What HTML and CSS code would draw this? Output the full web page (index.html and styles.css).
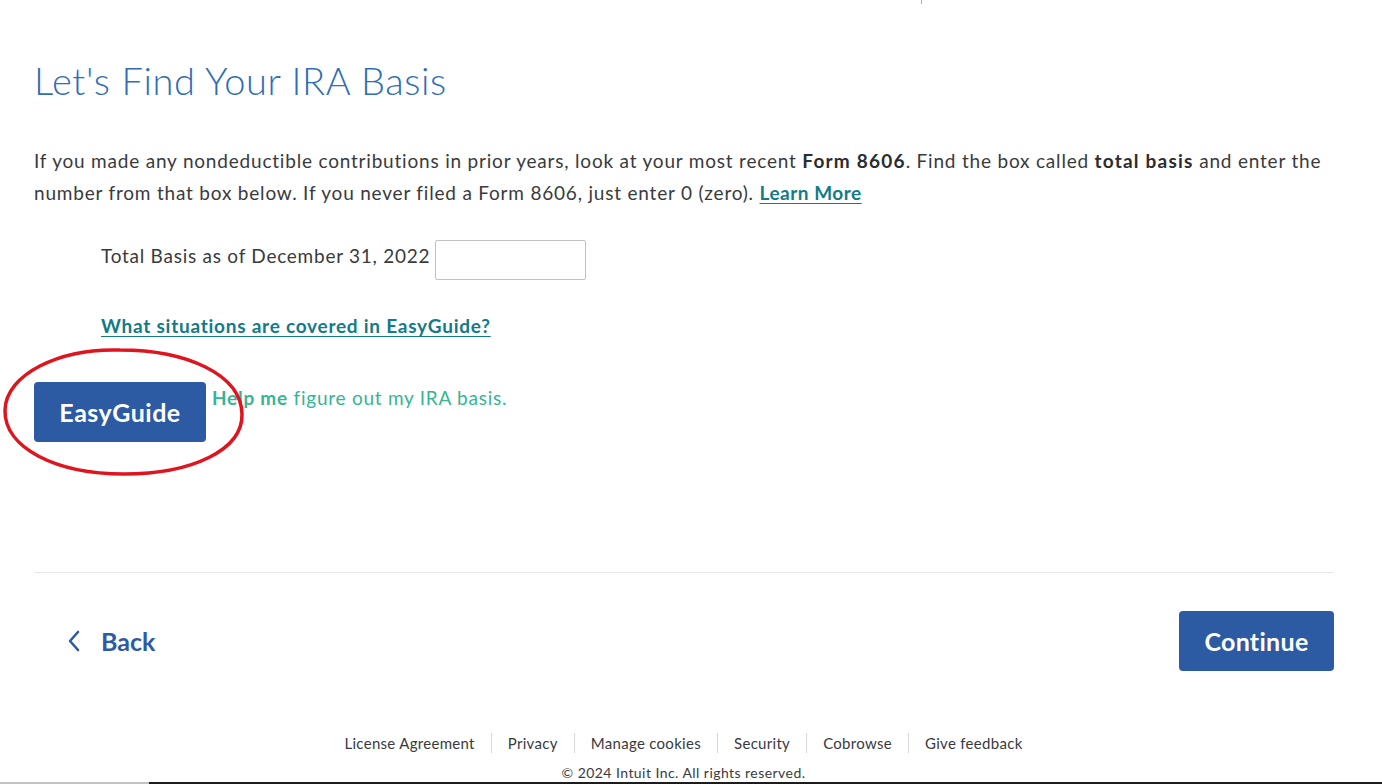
FILE: index.html
```html
<!DOCTYPE html>
<html lang="en">
<head>
    <meta charset="UTF-8">
    <meta name="viewport" content="width=device-width, initial-scale=1.0">
    <title>Let's Find Your IRA Basis</title>
    <link rel="stylesheet" href="styles.css">
</head>
<body>
    <div class="top-edge"><span class="top-tick"></span></div>

    <main class="page">
        <h1 class="title">Let's Find Your IRA Basis</h1>

        <p class="intro">
            If you made any nondeductible contributions in prior years, look at your most recent <b>Form 8606</b>. Find the box called <b>total basis</b> and enter the number from that box below. If you never filed a Form 8606, just enter 0 (zero). <a href="#" class="link">Learn More</a>
        </p>

        <div class="field-row">
            <label for="basis">Total Basis as of December 31, 2022</label>
            <input type="text" id="basis" class="basis-input">
        </div>

        <a href="#" class="link covered-link">What situations are covered in EasyGuide?</a>

        <div class="guide-row">
            <button type="button" class="btn guide-btn">EasyGuide</button>
            <span class="guide-text"><b>Help me</b> figure out my IRA basis.</span>
            <svg class="circle-mark" width="250" height="140" viewBox="0 0 250 140">
                <path d="M120 6 C 60 4, 6 30, 5 66 C 4 104, 56 130, 124 130 C 192 130, 243 106, 242 70 C 241 30, 186 6, 120 6 Z" fill="none" stroke="#e0141e" stroke-width="3.5"/>
            </svg>
        </div>

        <hr class="divider">

        <div class="nav-row">
            <a href="#" class="back-link">
                <svg width="14" height="22" viewBox="0 0 14 22"><path d="M11 2 L3 11 L11 20" fill="none" stroke="#2d5ba3" stroke-width="2.6" stroke-linecap="round" stroke-linejoin="round"/></svg>
                <span>Back</span>
            </a>
            <button type="button" class="btn continue-btn">Continue</button>
        </div>
    </main>

    <footer class="footer">
        <nav class="footer-links">
            <a href="#">License Agreement</a>
            <a href="#">Privacy</a>
            <a href="#">Manage cookies</a>
            <a href="#">Security</a>
            <a href="#">Cobrowse</a>
            <a href="#">Give feedback</a>
        </nav>
        <div class="copyright">&copy; 2024 Intuit Inc. All rights reserved.</div>
    </footer>

    <div class="taskbar"><span class="taskbar-left"></span><span class="taskbar-right"></span></div>
</body>
</html>
```

FILE: styles.css
```css
body {
    margin: 0;
    font-family: Lato, "Open Sans", sans-serif;
    color: #393a3d;
    background: #fff;
    overflow: hidden;
}
.top-edge {
    height: 4px;
}
.top-tick {
    display: block;
    width: 1px;
    height: 4px;
    margin-left: 921px;
    background: #a9b4c2;
}
.page {
    padding: 0 48px 0 34px;
}
.title {
    margin: 53px 0 0;
    font-size: 38px;
    line-height: 46px;
    font-weight: 300;
    letter-spacing: 0.6px;
    color: #2f6db5;
}
.intro {
    margin: 42px 0 0;
    font-size: 19px;
    line-height: 32px;
    letter-spacing: 0.8px;
}
.intro b {
    font-weight: 700;
    letter-spacing: 1.2px;
    color: #2b2c2f;
}
.intro .link {
    letter-spacing: 0.5px;
}
.link {
    color: #137a87;
    font-weight: 700;
    text-decoration: underline;
    text-underline-offset: 3px;
}
.field-row {
    margin: 31px 0 0 67px;
    display: flex;
    align-items: flex-start;
    gap: 5px;
    height: 40px;
}
.field-row label {
    font-size: 19px;
    line-height: 32px;
    letter-spacing: 0.75px;
}
.basis-input {
    width: 151px;
    height: 40px;
    box-sizing: border-box;
    border: 1px solid #bfc1c4;
    border-radius: 2px;
    font-size: 18px;
}
.covered-link {
    display: block;
    width: max-content;
    margin: 34px 0 0 67px;
    font-size: 19px;
    line-height: 24px;
    letter-spacing: 0.75px;
}
.guide-row {
    position: relative;
    margin-top: 44px;
    display: flex;
    align-items: flex-start;
    gap: 6px;
}
.btn {
    height: 60px;
    border: none;
    border-radius: 4px;
    background: #2d5ba3;
    color: #fff;
    font-family: Lato, "Open Sans", sans-serif;
    font-weight: 700;
    cursor: pointer;
}
.guide-btn {
    width: 172px;
    font-size: 25px;
    letter-spacing: 0.5px;
}
.guide-text {
    margin-top: 4px;
    font-size: 19px;
    line-height: 24px;
    letter-spacing: 0.75px;
    color: #35b593;
}
.circle-mark {
    position: absolute;
    left: -34px;
    top: -38px;
}
.divider {
    margin: 130px 0 0;
    border: none;
    border-top: 1px solid #e6e7e9;
}
.nav-row {
    margin-top: 38px;
    display: flex;
    justify-content: space-between;
    align-items: center;
}
.back-link {
    display: flex;
    align-items: center;
    gap: 20px;
    height: 60px;
    padding-left: 33px;
    color: #2d5ba3;
    font-size: 25px;
    font-weight: 700;
    text-decoration: none;
}
.continue-btn {
    width: 155px;
    font-size: 25px;
    letter-spacing: 0.3px;
}
.footer {
    margin-top: 62px;
    padding-right: 15px;
    text-align: center;
}
.footer-links {
    display: flex;
    justify-content: center;
    font-size: 15px;
    line-height: 20px;
    letter-spacing: 0.3px;
}
.footer-links a {
    padding: 0 16px;
    color: #393a3d;
    text-decoration: none;
    border-left: 1px solid #d4d7dc;
}
.footer-links a:first-child {
    border-left: none;
}
.copyright {
    margin-top: 10px;
    font-size: 14px;
    line-height: 20px;
    letter-spacing: 0.45px;
}
.taskbar {
    position: fixed;
    left: 0;
    right: 0;
    bottom: 0;
    height: 2px;
    display: flex;
}
.taskbar-left {
    width: 149px;
    background: #c2c2c2;
}
.taskbar-right {
    flex: 1;
    background: #1c1c1c;
}
```
